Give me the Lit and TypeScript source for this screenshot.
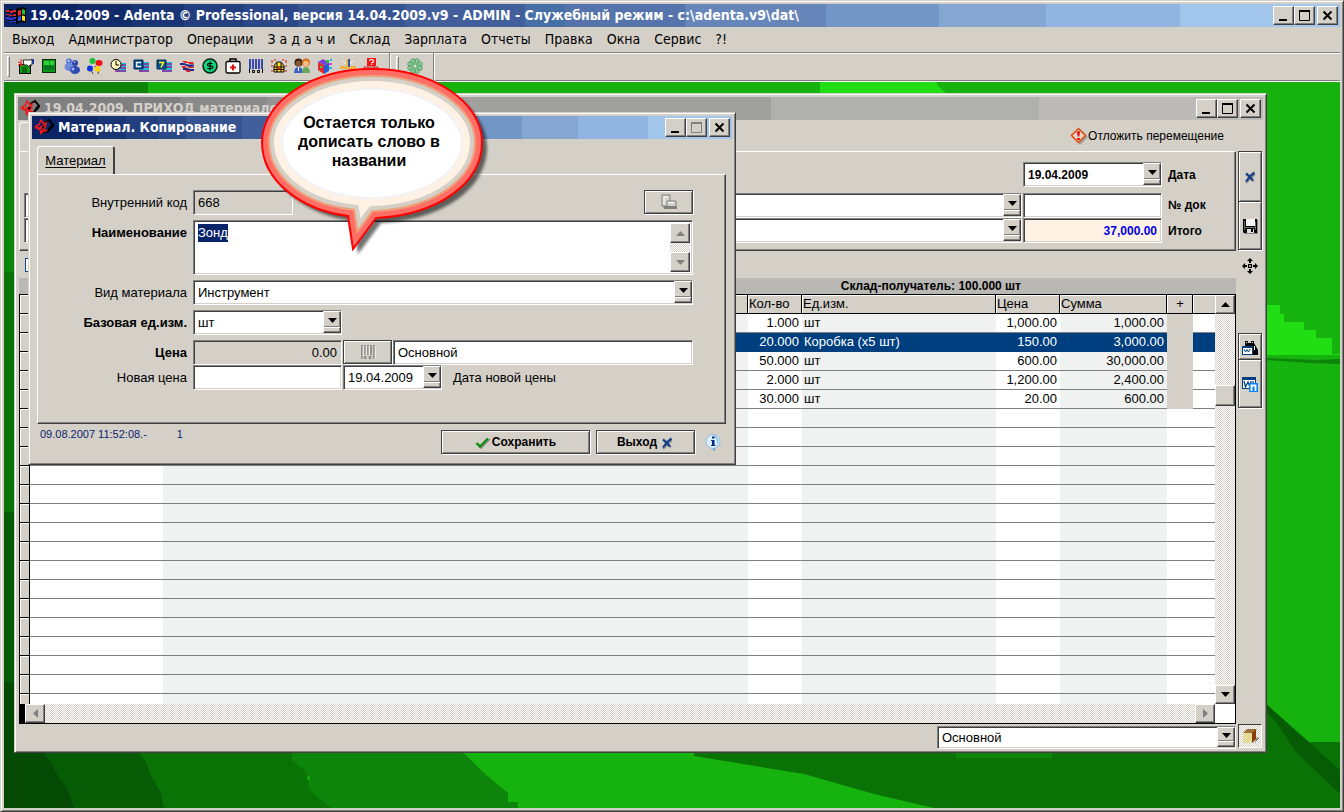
import { LitElement, html, svg, css } from "lit";
import { customElement } from "lit/decorators.js";
import { classMap } from "lit/directives/class-map.js";

/* ---------- glyphs ---------- */

const icon = (body: unknown, size = 16) =>
  html`<svg class="ico" width=${size} height=${size} viewBox="0 0 ${size} ${size}" aria-hidden="true">${body}</svg>`;

const tri = {
  down: html`<svg class="ico" width="9" height="5" viewBox="0 0 9 5" aria-hidden="true"><path d="M0 0h9L4.5 5z" fill="currentColor" /></svg>`,
  up: html`<svg class="ico" width="9" height="5" viewBox="0 0 9 5" aria-hidden="true"><path d="M0 5h9L4.5 0z" fill="currentColor" /></svg>`,
  left: html`<svg class="ico" width="5" height="9" viewBox="0 0 5 9" aria-hidden="true"><path d="M5 0v9L0 4.5z" fill="currentColor" /></svg>`,
  right: html`<svg class="ico" width="5" height="9" viewBox="0 0 5 9" aria-hidden="true"><path d="M0 0v9L5 4.5z" fill="currentColor" /></svg>`,
};

const flag = icon(svg`
  <path d="M10 3q4-3 10-1v15q-5-2-10 1z" fill="#000"/>
  <path d="M12 5q2-1.500 3-1v5q-1.500 0-3 1z" fill="#f03030"/><path d="M16 3.500q2-.5 3 .5v5q-1.500-1-3-.5z" fill="#20c030"/>
  <path d="M12 11q1.500-1 3-1v4.500q-1.500 0-3 1z" fill="#2a50ff"/><path d="M16 9.500q1.500 0 3 .7v5q-1.500-1-3-.7z" fill="#ffe020"/>
  <path d="M0 4h3v2H0zM3 5h4v2H3zM7 4h3v2H7zM0 8h3v1H0zM3 9h3v1H3zM7 8h3v2H7z" fill="#e02020"/>
  <path d="M0 11h3v2H0zM3 12h4v2H3zM7 11h3v2H7zM3 15h3v1H3zM7 15h3v1H7z" fill="#3838e0"/>
  <path d="M3 3h3v1H3zM6 7h4v1H6zM1 6h3v1H1zM6 10h4v1H6zM0 10h2v1H0zM7 13h3v1H7zM2 14h4v1H2z" fill="#000"/>`, 20);

const adenta = icon(svg`
  <path d="M10 5l5-3 4 5-1 2-5 5-4-1" fill="none" stroke="#000" stroke-width="2"/>
  <path d="M17 7h3l-3 4h-3z" fill="#000"/>
  <path d="M5 7l2-5 3 4 2-1-1 4" fill="none" stroke="#f01818" stroke-width="1.600"/>
  <path d="M1 9l4-2.500M1 9l5 2 1 4 3-3 3 1" fill="none" stroke="#f01818" stroke-width="2"/>
  <path d="M5 9l4-2 4 1-3 3.500-3-.5z" fill="#f01818"/>
  <path d="M8 8.500l3-.5-1.500 2.500H8z" fill="#000"/>`, 20);

const glyphs: Record<string, unknown> = {
  door: svg`<path d="M1 6h12v10H1z" fill="#000"/><path d="M2 7h10v8H2z" fill="#11a016"/><path d="M4 9h5v6H4z" fill="#0a6a10"/><path d="M5 2h8l1-1v6h-2l-1 2-2-2H6z" fill="#fff" stroke="#000" stroke-width=".8"/><path d="M0 4l3 1 2 3M3 1v7M0 7h5" stroke="#d22" fill="none"/><path d="M14 1h2v5h-2z" fill="#223a9b"/>`,
  board: svg`<path d="M1 1h14v14H1z" fill="#0a2a0a"/><path d="M2 2h12v12H2z" fill="#0b9a14"/><path d="M3 3h5v4H3zM9 3h4v4H9z" fill="#2fd23a"/><path d="M4 12V8h2v4M8 12V8h2v4M12 12V8" stroke="#053" fill="none"/>`,
  people: svg`<circle cx="5" cy="3.500" r="3" fill="#5673d0"/><ellipse cx="5" cy="9" rx="4.500" ry="4" fill="#6f89dd"/><circle cx="11" cy="5" r="3" fill="#2943a8"/><ellipse cx="11" cy="12" rx="5" ry="4" fill="#2d49b5"/><circle cx="4.500" cy="3" r="1" fill="#dfe7ff"/><circle cx="10.500" cy="4" r="1" fill="#a9baf2"/><circle cx="9" cy="11" r="1.500" fill="#a9baf2"/>`,
  balloons: svg`<path d="M4 12l2 4M12 10l-1 6M8 8l1 5" stroke="#222" fill="none" stroke-width=".8"/><circle cx="5.500" cy="3" r="3" fill="#16c435"/><ellipse cx="12" cy="5" rx="3.500" ry="3" fill="#f01010"/><ellipse cx="3" cy="10.500" rx="3" ry="3" fill="#1133dd"/><circle cx="10.500" cy="11" r="2.800" fill="#ffd400"/>`,
  clockbook: svg`<path d="M8 5h8v9H7z" fill="#19c3cf"/><path d="M8 7h8M8 10h8M5 13h11" stroke="#a11c9b" stroke-width="1.500"/><circle cx="6" cy="6.500" r="5" fill="#fff6b8" stroke="#000"/><path d="M6 3v4h3" stroke="#000" fill="none"/>`,
  cbook: svg`<path d="M8 4h8v10H6z" fill="#19c3cf"/><path d="M9 6h7M9 9h7M6 13h10" stroke="#a11c9b" stroke-width="1.500"/><path d="M1 2h9v9H1z" fill="#0b4f96" stroke="#012a55"/><path d="M8 4.500H3.500v4H8" stroke="#fff" fill="none" stroke-width="1.300"/>`,
  sbook: svg`<path d="M8 4h8v10H6z" fill="#19c3cf"/><path d="M9 6h7M9 9h7M6 13h10" stroke="#a11c9b" stroke-width="1.500"/><path d="M1 2h9v9H1z" fill="#0b4f96" stroke="#012a55"/><path d="M3 4.500h4.500L5 9.500" stroke="#ff0" fill="none" stroke-width="1.500"/>`,
  tapes: svg`<path d="M3 3h4l3 2h-4zM2 8h4l2 2H4zM6 12h4l2 2H8z" fill="#e02020"/><path d="M9 4h5l1 2h-5zM8 8h5l2 2h-5z" fill="#e02020"/><path d="M1 6h4l4 1.500h6M4 11h4l4 1h3" fill="none" stroke="#202a8c" stroke-width="1.800"/>`,
  dollar: svg`<circle cx="8" cy="8" r="7" fill="#12d37b" stroke="#021" stroke-width="1.500"/><path d="M10.500 5.500H7q-1.500 0-1.500 1.200T7 8h2.500q1.300 0 1.300 1.200T9.500 10.500H5.500M8 3.500v9" stroke="#000" fill="none" stroke-width="1.200"/>`,
  medkit: svg`<path d="M5 3V1h6v2" fill="none" stroke="#000" stroke-width="1.500"/><rect x="1" y="3.500" width="14" height="11.500" rx="1.500" fill="#fff" stroke="#000" stroke-width="1.300"/><path d="M8 6.500v6M5 9.500h6" stroke="#e01010" stroke-width="2"/>`,
  barcode: svg`<path d="M2 1v10M5 1v10M8 1v10M11 1v10M14 1v10" stroke="#1026a8" stroke-width="1.600"/><path d="M1.500 11v4M14.500 11v4M4.500 12.500h2v2h-2zM9.500 12.500h2v2h-2z" fill="none" stroke="#000"/>`,
  basket: svg`<path d="M1 2v3M4 1v2M12 1v2M15 2v3M1 7v2M15 7v2M1 12v2M15 12v2" stroke="#e01010"/><path d="M3 14V8l3-4h4l3 4v6z" fill="#ffe23a" stroke="#000"/><path d="M3 9h10M3 11.500h10M6 5v9M10 5v9" stroke="#000"/><path d="M6.500 9.500h3v2h-3z" fill="#e22"/>`,
  team: svg`<circle cx="4.500" cy="4.500" r="4" fill="#3a2010"/><circle cx="4.500" cy="5.500" r="2.800" fill="#8a5a30"/><circle cx="12" cy="4.500" r="4" fill="#d8701b"/><circle cx="12" cy="5.500" r="2.800" fill="#f6bd84"/><path d="M0 15q0-6 4.500-6T9 15z" fill="#3a63c8"/><path d="M8 15q0-6 4-6t4 6z" fill="#6aa85e"/><path d="M4 9h1v4H4z" fill="#fff"/>`,
  cube: svg`<path d="M1 4l6 3v9l-6-4z" fill="#e02a30"/><path d="M7 7l5-2v8l-5 3z" fill="#2a58d6"/><path d="M1 4l5-3 6 4-5 2z" fill="#7b3cd8"/><path d="M9 2h3v3H9z" fill="#1dbb4a"/><path d="M12 5h3v2h-3z" fill="#e83ad4"/><path d="M13 1h2v2h-2zM12 9h3v2h-3z" fill="#19b9e8"/><path d="M3 8h2v2H3z" fill="#2fd84c"/>`,
  scale: svg`<path d="M6 1h2v8H6z" fill="#e7c04c"/><path d="M8 1h2v8H8z" fill="#3654b0"/><path d="M3 3l3 3M13 3l-3 3" stroke="#fff"/><path d="M0 8h5l3 2 3-2h5v3H0z" fill="#f0b040"/><path d="M3 12h10v2H3z" fill="#b87a22"/>`,
  help: svg`<path d="M4 0h9v8H4z" fill="#f01818"/><path d="M6.500 3q0-1.500 2-1.500t2 1.500-2 2M8.500 5.800v1.200" stroke="#fff" fill="none" stroke-width="1.200"/><path d="M1 9h4v4H1zM11 9h4v4h-4zM5 9h6" stroke="#d01818" fill="none"/>`,
  clover: svg`<g fill="#8cc898" stroke="#4c9a60" stroke-width=".8"><circle cx="6" cy="3" r="2.300"/><circle cx="10" cy="3" r="2.300"/><circle cx="6" cy="13" r="2.300"/><circle cx="10" cy="13" r="2.300"/><circle cx="3" cy="6" r="2.300"/><circle cx="3" cy="10" r="2.300"/><circle cx="13" cy="6" r="2.300"/><circle cx="13" cy="10" r="2.300"/></g><circle cx="8" cy="8" r="4.500" fill="#7fbf8c"/><path d="M8 2v12M2 8h12M4 4l8 8M12 4l-8 8" stroke="#4c9a60" stroke-width=".6"/><circle cx="8" cy="8" r="1.500" fill="#cfe8d2"/>`,
  cross: svg`<path d="M5 6l7 6.500M13 5l-9 9" stroke="#909090" stroke-width="1.800" fill="none"/><path d="M4 4.500q3 2 7 7M12.500 3.500Q8 6.500 4 12.500" stroke="#173f86" stroke-width="2.200" fill="none"/>`,
  floppy: svg`<path d="M2 2h14v14H2z" fill="#888"/><path d="M1 1h14v14H2l-1-1z" fill="#000"/><path d="M4 1h9v7H4z" fill="#f4f4f4"/><path d="M2 3h1v9H2zM13 4h1v8h-1z" fill="#666"/><path d="M2 9h12v1H2z" fill="#666"/><path d="M5 11h7v4H5z" fill="#ddd"/><path d="M9 11h2v3H9z" fill="#000"/>`,
  move: svg`<path d="M8 0l3 3H9v2H7V3H5zM8 16l-3-3h2v-2h2v2h2zM0 8l3-3v2h2v2H3v2zM16 8l-3 3V9h-2V7h2V5z" fill="#000"/><path d="M6 6h1v4H6zM9 6h1v4H9zM7 6h2v1H7zM7 9h2v1H7zM7.500 7.500h1v1h-1z" fill="#000"/>`,
  find: svg`<path d="M3 2h3v2h3V2h3v2l4 7v5h-5V8H3V4z" fill="#000"/><path d="M12 7h1v4h-1zM4 3h1v1H4zM10 3h1v1h-1z" fill="#fff"/><path d="M0 7h11v9H0z" fill="#003f7f"/><path d="M1 9h9v6H1z" fill="#fff"/><path d="M2 10l1.500 3L5 10.500 6.500 13 8 10" stroke="#003f7f" fill="none"/>`,
  sheet: svg`<path d="M0 1h14v12H0z" fill="#003f7f"/><path d="M1 4h12v8H1z" fill="#fff"/><path d="M2 5l1.500 6L6 6l2 5 1-6M11 5v3" stroke="#003f7f" stroke-width="1.300" fill="none"/><path d="M7 7h9v9H7z" fill="#0a84ff"/><path d="M9.500 15V9.500h4V15" stroke="#fff" stroke-width="1.800" fill="none"/>`,
  box: svg`<path d="M12 16l5-6-2-1z" fill="#807a6a"/><path d="M1 5l4-4h10l-4 4z" fill="#9a733a"/><path d="M1 5h9v10H1z" fill="#e4dc96"/><path d="M10 5l4-4v10l-4 4z" fill="#8c3c06"/>`,
  warn: svg`<path d="M9 1l8 8-8 8-8-8z" fill="#808080" transform="translate(1 1)" opacity=".6"/><path d="M8.500 1.500l7 7-7 7-7-7z" fill="#e6d4c8" stroke="#e04a08" stroke-width="1.500"/><path d="M7 5q1.500-2 3 0L9.200 9.500H7.800zM7.200 11h2.600v2H7.200z" fill="#f00000"/>`,
  check: svg`<path d="M3 9l3 4 9-9" stroke="#8a8a8a" stroke-width="1.500" fill="none"/><path d="M1.500 8L5 11.500 13 3.500" stroke="#0a8a10" stroke-width="2.400" fill="none"/>`,
  info: svg`<path d="M6 14l4 3v-4z" fill="#5a8fc0"/><circle cx="8" cy="7.500" r="7" fill="#d8effc" stroke="#8cbbe0"/><path d="M8 1a7 7 0 0 1 4 11q2-6-4-11z" fill="#6fb6ea"/><path d="M7 2.500h2.500v2H7zM6 6h3.500v5h1v1H6v-1h1V7H6z" fill="#0a2a8a"/>`,
  pages: svg`<path d="M1 1h8v11H1z" fill="#d4d0c8" stroke="#808080"/><path d="M3 3h4M3 3v8" stroke="#fff" fill="none"/><path d="M6 7h9v6H6z" fill="#d4d0c8" stroke="#808080"/><path d="M2 12h14v3H3z" fill="#808080"/><path d="M7 8.500h6" stroke="#fff"/>`,
  greybars: svg`<path d="M2 1v14M5 1v10M8 1v10M11 1v10M14 1v14" stroke="#808080" stroke-width="1.500"/><path d="M3.200 2v13M6.200 2v9M9.200 2v9M15.200 2v13" stroke="#fff" stroke-width=".8"/><path d="M4 12.500h2v2H4zM9 12.500h2v2H9z" fill="none" stroke="#808080"/>`,
};

const g = (name: string, size = 16) => icon(glyphs[name], size);

/* ---------- shared look ---------- */

const chrome = css`
  * { box-sizing: border-box; }
  button, input, select, textarea { font: inherit; color: inherit; margin: 0; padding: 0; border: 0; border-radius: 0; outline: none; }
  .ico { display: block; flex: none; overflow: visible; }
  .frame {
    background: #d4d0c8;
    border: 1px solid;
    border-color: #d4d0c8 #404040 #404040 #d4d0c8;
    box-shadow: inset 1px 1px #fff, inset -1px -1px #808080;
    padding: 3px;
    display: flex;
    flex-direction: column;
  }
  .title {
    flex: none;
    height: 23px;
    display: flex;
    align-items: center;
    gap: 4px;
    padding: 0 2px;
    color: #fff;
    font: bold 14px/23px "DejaVu Sans Condensed", "DejaVu Sans", sans-serif;
    white-space: nowrap;
    background: linear-gradient(90deg,
      #0a2466 0 5.5%, #102a6c 0 9.5%, #1a3576 0 13.5%, #243f80 0 18%, #2d4888 0 22%, #365492 0 30%,
      #415f9b 0 39%, #466fa6 0 42%, #5674ac 0 51%, #6685b9 0 61.500%, #7296c6 0 70%, #84a6d0 0 78%, #92b4e0 0 88%, #a2c5eb 0);
  }
  .title.idle {
    color: #d4d0c8;
    background: linear-gradient(90deg, #808080 0 13%, #8a8a8a 0 20%, #949494 0 35%, #a0a09f 0 60.500%, #b0b0ae 0 82%, #bcbbb7 0);
  }
  .title b { flex: 1; overflow: hidden; font-weight: bold; }
  .ctl { display: flex; }
  .ctl button { width: 21px; height: 19px; display: grid; place-items: center; }
  .ctl button:last-child { margin-left: 2px; }
  .raised {
    background: #d4d0c8;
    border: 1px solid;
    border-color: #fff #404040 #404040 #fff;
    box-shadow: inset -1px -1px #808080;
    color: #000;
  }
  .sunk {
    background: #fff;
    border: 1px solid;
    border-color: #808080 #fff #fff #808080;
    box-shadow: inset 1px 1px #404040, inset -1px -1px #d4d0c8;
    height: 25px;
    padding: 0 4px;
    min-width: 0;
  }
  .combo { display: grid; min-width: 0; }
  .combo select { grid-area: 1 / 1; appearance: none; width: 100%; padding-right: 20px; }
  .combo .drop { grid-area: 1 / 1; justify-self: end; width: 18px; margin: 1px 1px 2px 0; pointer-events: none; display: grid; place-items: center; padding-bottom: 4px; position: relative; }
  .drop::after { content: ""; position: absolute; inset: auto 0 1px 0; height: 4px; border-top: 1px solid #808080; box-shadow: inset 0 1px #fff; }
  .push {
    border: 1px solid #404040;
    background: #d4d0c8;
    box-shadow: inset 1px 1px #fff, inset -1px -1px #808080, 1px 1px #fff;
    display: flex; align-items: center; justify-content: center;
  }
  .dither { background: conic-gradient(#fff 25%, #d4d0c8 0 50%, #fff 0 75%, #d4d0c8 0) 0 0 / 2px 2px; }
`;

const controls = (disabledMax = false) => html`
  <div class="ctl">
    <button class="raised" aria-label="Свернуть"><svg class="ico" width="13" height="11" viewBox="0 0 13 11"><path d="M2 9h8v2H2z" /></svg></button>
    <button class="raised" aria-label="Развернуть"><svg class="ico" width="13" height="11" viewBox="0 0 13 11"><path d="M1.500 1v9.500h10V1z" fill="none" stroke=${disabledMax ? "#808080" : "#000"} /><path d="M1 0h11v2H1z" fill=${disabledMax ? "#808080" : "#000"} /></svg></button>
    <button class="raised" aria-label="Закрыть"><svg class="ico" width="13" height="11" viewBox="0 0 13 11"><path d="M2.500 1.500l8 8M10.500 1.500l-8 8" stroke="#000" stroke-width="2" /></svg></button>
  </div>`;

/* ---------- goods receipt window ---------- */

interface Line { qty: string; unit: string; price: string; sum: string; current?: boolean; }

@customElement("receipt-window")
export class ReceiptWindow extends LitElement {
  static styles = [chrome, css`
    :host { display: flex; font: 13px/18px "Liberation Sans", Arial, sans-serif; color: #000; }
    .frame { flex: 1; min-width: 0; }
    .body { flex: 1; min-height: 0; display: grid; grid-template-columns: minmax(0, 1fr) 25px; gap: 2px; padding-left: 1px; }
    .left { display: flex; flex-direction: column; min-height: 0; }
    .head { display: flex; align-items: flex-end; height: 31px; flex: none; }
    .tab { width: 110px; height: 29px; border-left: 1px solid #fff; border-top: 1px solid #fff; border-radius: 4px 4px 0 0; background: #d4d0c8; }
    .defer { margin-left: auto; margin-right: 12px; align-self: center; display: flex; align-items: center; background: none; font-size: 12px; }
    .group {
      flex: none; border: 1px solid; border-color: #fff #404040 #404040 #fff; box-shadow: inset -1px -1px #808080;
      padding: 10px 4px 8px; display: grid; gap: 1px; grid-template-columns: minmax(0, 1fr) 139px 68px; height: 100px;
      grid-template-rows: 25px 4px 24px 25px; align-items: start;
    }
    .group label { font-weight: bold; padding-left: 5px; align-self: center; font-size: 12px; }
    .group .wide { grid-column: 1; }
    .group .date { grid-column: 2; grid-row: 1; font-weight: bold; font-size: 12px; }
    .l1 { grid-column: 3; grid-row: 1; }
    .r3 { grid-row: 3; }
    .r4 { grid-row: 4; }
    .total { background: #fff1e4; color: #0000e8; font-weight: bold; font-size: 12px; text-align: right; width: 100%; }
    .options { height: 27px; flex: none; display: flex; align-items: center; padding-left: 6px; }
    .options input { appearance: none; width: 14px; height: 14px; border: 1px solid #0a4a8a; background: #fff; }
    .strip { flex: none; height: 16px; background: #b9b8b4; font: bold 12px/16px "Liberation Sans", Arial, sans-serif; text-align: right; padding-right: 215px; }
    .grid {
      flex: 1; min-height: 0; border: 1px solid #000; display: grid; overflow: hidden;
      grid-template-columns: minmax(0, 1fr) 20px; grid-template-rows: minmax(0, 1fr) 19px;
    }
    .view { overflow: hidden; background: #fff; }
    table { width: 100%; table-layout: fixed; border-collapse: separate; border-spacing: 0; }
    th, td { height: 19px; padding: 0 2px; overflow: hidden; white-space: nowrap; font-weight: normal; text-align: left; line-height: 18px; }
    thead th { background: #d4d0c8; border-right: 1px solid #000; border-bottom: 1px solid #000; padding: 0 0 0 1px; box-shadow: inset 1px 1px #fff; }
    thead th:last-child { border-right: 0; }
    tbody th { background: #d4d0c8; border-right: 1px solid #000; border-bottom: 1px solid #000; box-shadow: inset 1px 1px #fff; padding: 0; }
    td { border-bottom: 1px solid #808080; }
    .num { text-align: right; padding-right: 3px; }
    .tint { background: #f0f2f1; }
    .mid { text-align: center; }
    .current td { background: #003f7f; color: #fff; border-bottom-color: #003f7f; }
    td.mark, .current td.mark { background: #d4d0c8; border-bottom-color: #d4d0c8; }
    .rail { display: flex; flex-direction: column; }
    .rail button, .foot button { display: grid; place-items: center; width: 20px; height: 19px; flex: none; }
    .thumb { height: 21px; margin-top: 71px; flex: none; }
    .rail .end { margin-top: auto; }
    .foot { display: flex; background-color: #d4d0c8; color: #808080; justify-content: space-between; border-left: 5px solid #000; }
    .foot button { color: #808080; }
    .corner { background: #fff; }
    .status { flex: none; padding-top: 2px; display: flex; justify-content: flex-end; height: 25px; }
    .status .combo { width: 299px; }
    .status select { height: 23px; }
    .side { display: flex; flex-direction: column; padding-top: 31px; align-items: stretch; padding-bottom: 1px; }
    .side button { width: 24px; padding: 0; }
    .side .first { height: 50px; border-bottom: 0; }
    .side .second { height: 49px; }
    .side .move { height: 32px; background: none; display: grid; place-items: center; }
    .side .find { height: 26px; margin-top: 51px; border-bottom: 0; }
    .side .sheet { height: 49px; }
    .side .stock { height: 24px; margin-top: auto; border: 1px solid; border-color: #404040 #fff #fff #404040; display: grid; place-items: center; }
  `];

  private lines: Line[] = [
    { qty: "1.000", unit: "шт", price: "1,000.00", sum: "1,000.00" },
    { qty: "20.000", unit: "Коробка (x5 шт)", price: "150.00", sum: "3,000.00", current: true },
    { qty: "50.000", unit: "шт", price: "600.00", sum: "30,000.00" },
    { qty: "2.000", unit: "шт", price: "1,200.00", sum: "2,400.00" },
    { qty: "30.000", unit: "шт", price: "20.00", sum: "600.00" },
  ];

  private row(line?: Line) {
    return html`<tr class=${classMap({ current: !!line?.current })}>
      <th scope="row"></th><td></td><td class="tint"></td>
      <td class="num">${line?.qty}</td><td class="tint">${line?.unit}</td><td class="num">${line?.price}</td>
      <td class="num tint">${line?.sum}</td><td class=${classMap({ mark: !!line })}></td><td></td>
    </tr>`;
  }

  render() {
    return html`<section class="frame">
      <div class="title idle">${adenta}<b>19.04.2009. ПРИХОД материалов</b>${controls()}</div>
      <div class="body">
        <div class="left">
          <div class="head"><div class="tab"></div><button class="defer">${g("warn", 18)}Отложить перемещение</button></div>
          <div class="group">
            <div class="combo date"><select id="date" class="sunk"><option>19.04.2009</option></select><span class="drop raised">${tri.down}</span></div>
            <label class="l1" for="date">Дата</label>
            <div class="combo wide r3"><select class="sunk" aria-label="Поставщик"><option></option></select><span class="drop raised">${tri.down}</span></div>
            <input id="doc" class="sunk r3" /><label class="r3" for="doc">№ док</label>
            <div class="combo wide r4"><select class="sunk" aria-label="Склад"><option></option></select><span class="drop raised">${tri.down}</span></div>
            <input id="total" class="sunk total r4" readonly .value=${"37,000.00"} /><label class="r4" for="total">Итого</label>
          </div>
          <div class="options"><input type="checkbox" aria-label="Все строки" /></div>
          <div class="strip">Склад-получатель: 100.000 шт</div>
          <div class="grid">
            <div class="view">
              <table>
                <colgroup><col style="width:10px" /><col style="width:133px" /><col /><col style="width:54px" /><col style="width:194px" /><col style="width:64px" /><col style="width:107px" /><col style="width:26px" /><col style="width:22px" /></colgroup>
                <thead><tr><th></th><th></th><th></th><th>Кол-во</th><th>Ед.изм.</th><th>Цена</th><th>Сумма</th><th class="mid">+</th><th></th></tr></thead>
                <tbody>${this.lines.map((l) => this.row(l))}${Array.from({ length: 30 }, () => this.row())}</tbody>
              </table>
            </div>
            <div class="rail dither">
              <button class="raised" aria-label="Вверх">${tri.up}</button>
              <div class="thumb raised"></div>
              <button class="raised end" aria-label="Вниз">${tri.down}</button>
            </div>
            <div class="foot dither"><button class="raised" aria-label="Влево">${tri.left}</button><button class="raised" aria-label="Вправо">${tri.right}</button></div>
            <div class="corner"></div>
          </div>
          <div class="status"><div class="combo"><select class="sunk" aria-label="Склад-получатель"><option>Основной</option></select><span class="drop raised">${tri.down}</span></div></div>
        </div>
        <div class="side">
          <button class="push first" aria-label="Отмена">${g("cross")}</button>
          <button class="push second" aria-label="Сохранить">${g("floppy")}</button>
          <button class="move" aria-label="Переместить">${g("move")}</button>
          <button class="push find" aria-label="Поиск">${g("find")}</button>
          <button class="push sheet" aria-label="Печать">${g("sheet")}</button>
          <button class="stock dither" aria-label="Остатки">${g("box")}</button>
        </div>
      </div>
    </section>`;
  }
}

/* ---------- material dialog ---------- */

@customElement("material-dialog")
export class MaterialDialog extends LitElement {
  static styles = [chrome, css`
    :host { display: block; font: 13px/18px "Liberation Sans", Arial, sans-serif; color: #000; }
    .client { padding: 7px 6px 7px 5px; }
    .tab {
      display: block; width: 78px; height: 28px; background: #d4d0c8; text-decoration: underline;
      border: 1px solid #fff; border-right: 2px solid #404040; border-bottom: 0; border-radius: 3px 3px 0 0; text-underline-offset: 2px;
    }
    .panel { border: 1px solid; border-color: #fff #404040 #404040 #fff; box-shadow: inset -1px -1px #808080; padding: 15px 32px 33px 0; display: grid; gap: 5px; }
    .row { display: grid; grid-template-columns: 149px minmax(0, 1fr); gap: 6px; }
    .row > label { text-align: right; padding-top: 4px; }
    .row > .strong { font-weight: bold; }
    .fields { display: flex; gap: 1px; }
    .code { width: 100px; background: #d4d0c8; }
    .half { width: 149px; flex: none; }
    .push.small { width: 49px; height: 24px; }
    .fields .far { margin-left: auto; }
    .price { background: #d4d0c8; text-align: right; }
    .rest { flex: 1; }
    .date { width: 99px; }
    .hint { padding: 4px 0 0 10px; }
    .tight { display: grid; }
    .memo { display: flex; height: 55px; padding: 2px; }
    .memo textarea { flex: 1; resize: none; padding: 1px 2px; background: #fff; overflow: hidden; line-height: 18px; }
    .memo textarea::selection { background: #0a246a; color: #fff; }
    .rail { width: 20px; display: flex; flex-direction: column; justify-content: space-between; }
    .rail button { height: 20px; display: grid; place-items: center; color: #808080; }
    .bottom { display: flex; align-items: flex-start; padding-top: 6px; }
    .stamp { font-size: 11px; line-height: 8px; color: #0a246a; padding-left: 3px; display: flex; gap: 30px; }
    .bottom .push { height: 24px; font-weight: bold; font-size: 12px; gap: 2px; }
    .save { width: 149px; margin-left: auto; }
    .exit { width: 99px; margin-left: 6px; }
    .about { margin: 4px 5px 0 10px; background: none; }
  `];

  firstUpdated() {
    const memo = this.renderRoot.querySelector("textarea")!;
    memo.focus({ preventScroll: true });
    memo.setSelectionRange(0, memo.value.length);
  }

  render() {
    return html`<section class="frame" role="dialog" aria-label="Материал">
      <div class="title">${adenta}<b>Материал. Копирование</b>${controls(true)}</div>
      <div class="client">
        <button class="tab">Материал</button>
        <div class="panel">
          <div class="row"><label for="code">Внутренний код</label>
            <div class="fields"><input id="code" class="sunk code" readonly .value=${"668"} /><button class="push small far" aria-label="Копировать">${g("pages")}</button></div></div>
          <div class="row"><label class="strong" for="name">Наименование</label>
            <div class="sunk memo"><textarea id="name" .value=${"Зонд"}></textarea>
              <div class="rail dither"><button class="raised" aria-label="Вверх">${tri.up}</button><button class="raised" aria-label="Вниз">${tri.down}</button></div></div></div>
          <div class="row"><label for="kind">Вид материала</label>
            <div class="combo"><select id="kind" class="sunk"><option>Инструмент</option></select><span class="drop raised">${tri.down}</span></div></div>
          <div class="row"><label class="strong" for="unit">Базовая ед.изм.</label>
            <div class="combo half"><select id="unit" class="sunk"><option>шт</option></select><span class="drop raised">${tri.down}</span></div></div>
          <div class="tight">
            <div class="row"><label class="strong" for="price">Цена</label>
              <div class="fields"><input id="price" class="sunk half price" readonly .value=${"0.00"} /><button class="push small" aria-label="Штрихкод">${g("greybars")}</button><input class="sunk rest" aria-label="Прайс" .value=${"Основной"} /></div></div>
            <div class="row"><label for="next">Новая цена</label>
              <div class="fields"><input id="next" class="sunk half" />
                <div class="combo date"><select id="from" class="sunk"><option>19.04.2009</option></select><span class="drop raised">${tri.down}</span></div>
                <label class="hint" for="from">Дата новой цены</label></div></div>
          </div>
        </div>
        <div class="bottom">
          <div class="stamp"><span>09.08.2007 11:52:08.-</span><span>1</span></div>
          <button class="push save">${g("check", 15)}Сохранить</button>
          <button class="push exit">Выход ${g("cross", 15)}</button>
          <button class="about" aria-label="Справка">${g("info")}</button>
        </div>
      </div>
    </section>`;
  }
}

/* ---------- application shell ---------- */

const bubble = "M347 215C300 209 261 180 261 141C261 101 310 68 371 68C432 68 481 101 481 141C481 183 436 214 375 217L352 248Z";

@customElement("app-root")
export class AppRoot extends LitElement {
  static styles = [chrome, css`
    :host { display: block; font: 14px/20px "DejaVu Sans Condensed", "DejaVu Sans", sans-serif; color: #000; }
    .app { min-height: 100vh; position: relative; }
    nav { height: 25px; flex: none; display: flex; gap: 14px; padding: 0 8px 2px; align-items: center; white-space: nowrap; }
    nav button { background: none; }
    .bar { height: 30px; flex: none; display: flex; border-top: 1px solid #808080; border-bottom: 1px solid #fff; box-shadow: inset 0 1px #fff, inset 0 -1px #808080; }
    .tools { display: flex; align-items: center; padding: 0 7px 2px 3px; border-right: 1px solid #808080; box-shadow: 1px 0 #fff; margin-right: 1px; }
    .tools button { width: 23px; height: 24px; background: none; display: grid; place-items: center; }
    .tools.extra { padding: 0 7px 2px 5px; }
    .grip { width: 3px; height: 21px; border: 1px solid; border-color: #fff #808080 #808080 #fff; margin-right: 4px; }
    .desk { flex: 1; position: relative; overflow: hidden; background: #16b20e; }
    .wall { position: absolute; inset: 0; width: 100%; height: 100%; }
    receipt-window { position: absolute; left: 10px; top: 11px; right: 73px; bottom: 55px; }
    material-dialog { position: absolute; left: 24px; top: 30px; width: 708px; }
    .callout { position: absolute; left: 250px; top: 60px; width: 250px; height: 200px; }
    .callout svg { position: absolute; inset: 0; }
    .callout p { position: absolute; left: 34px; right: 48px; top: 52px; margin: 0; text-align: center; font: bold 16px/19px "Liberation Sans", Arial, sans-serif; }
  `];

  render() {
    const menu = ["Выход", "Администратор", "Операции", "З а д а ч и", "Склад", "Зарплата", "Отчеты", "Правка", "Окна", "Сервис", "?!"];
    const tools = ["door", "board", "people", "balloons", "clockbook", "cbook", "sbook", "tapes", "dollar", "medkit", "barcode", "basket", "team", "cube", "scale", "help"];
    return html`<main class="frame app">
      <div class="title">${flag}<b>19.04.2009 - Adenta © Professional, версия 14.04.2009.v9 - ADMIN - Служебный режим - c:\\adenta.v9\\dat\\</b>${controls()}</div>
      <nav>${menu.map((m) => html`<button>${m}</button>`)}</nav>
      <div class="bar">
        <div class="tools"><span class="grip"></span>${tools.map((t) => html`<button aria-label=${t}>${g(t)}</button>`)}</div>
        <div class="tools extra"><span class="grip"></span><button aria-label="clover">${g("clover")}</button></div>
      </div>
      <div class="desk">
        <svg class="wall" viewBox="0 0 1336 726" preserveAspectRatio="none" aria-hidden="true">
          <path d="M0 0h144v20H10v170H0z" fill="#0d840a" />
          <path d="M816 0h116l2 4 8 7H816z" fill="#20dd14" />
          <path d="M0 190h10v290H0z" fill="#0a7306" />
          <path d="M0 430h10v260H0z" fill="#055c05" />
          <path d="M1262 223h14v9h4v8h20v8h12v8h16v16h8v1h-74z" fill="#20dd14" />
          <path d="M1262 276l50 2 24-1v5l-30-1-44-3z" fill="#0d840a" />
          <path d="M0 600v126h80l-12-14-12-20-16-22-20-70z" fill="#044a04" />
          <path d="M20 660l20 10 6 10 8 14 10 14 6 18h92l-4-14-10-18-8-24z" fill="#055c05" />
          <path d="M134 660v10l8 10 6 16 8 12 4 18h168l-6-9-11-9-8-12 2-8-8-9V660z" fill="#0a7306" />
          <path d="M288 660v19l12 9 6 8-2 9 8 9 11 9 6 3h185v-6h-10v-9l-11-9-14-12-12-12-10-9V660z" fill="#0d840a" />
          <path d="M690 660h646v66H930l-60-14-70-20-110-18z" fill="#0a7306" />
          <path d="M690 660h358v16h-96v-5h-60v-3h-90v-3H690z" fill="#0d840a" />
          <path d="M1262 622l74 66v38h-74z" fill="#0a7306" />
          <path d="M1262 622l74 66v24l-44-42-20-30-10-10z" fill="#055c05" />
        </svg>
        <receipt-window></receipt-window>
        <material-dialog></material-dialog>
      </div>
      <aside class="callout">
        <svg width="250" height="200" viewBox="250 60 250 200" aria-hidden="true">
          <defs>
            <clipPath id="in"><path d=${bubble} /></clipPath>
            <filter id="soft" x="-10%" y="-10%" width="125%" height="125%"><feGaussianBlur stdDeviation="1.500" /></filter>
          </defs>
          <path d=${bubble} transform="translate(5 5)" fill="#000" opacity=".55" filter="url(#soft)" />
          <g clip-path="url(#in)" fill="none">
            <path d=${bubble} fill="#fff" />
            <path d=${bubble} stroke="#f0f2f4" stroke-width="42" />
            <path d=${bubble} stroke="#fff1e4" stroke-width="38" />
            <path d=${bubble} stroke="#d4d0c8" stroke-width="24" />
            <path d=${bubble} stroke="#eda37c" stroke-width="16" />
            <path d=${bubble} stroke="#ff6f66" stroke-width="12" />
          </g>
          <path d=${bubble} fill="none" stroke="#f00" stroke-width="2" />
        </svg>
        <p>Остается только<br />дописать слово в<br />названии</p>
      </aside>
    </main>`;
  }
}
